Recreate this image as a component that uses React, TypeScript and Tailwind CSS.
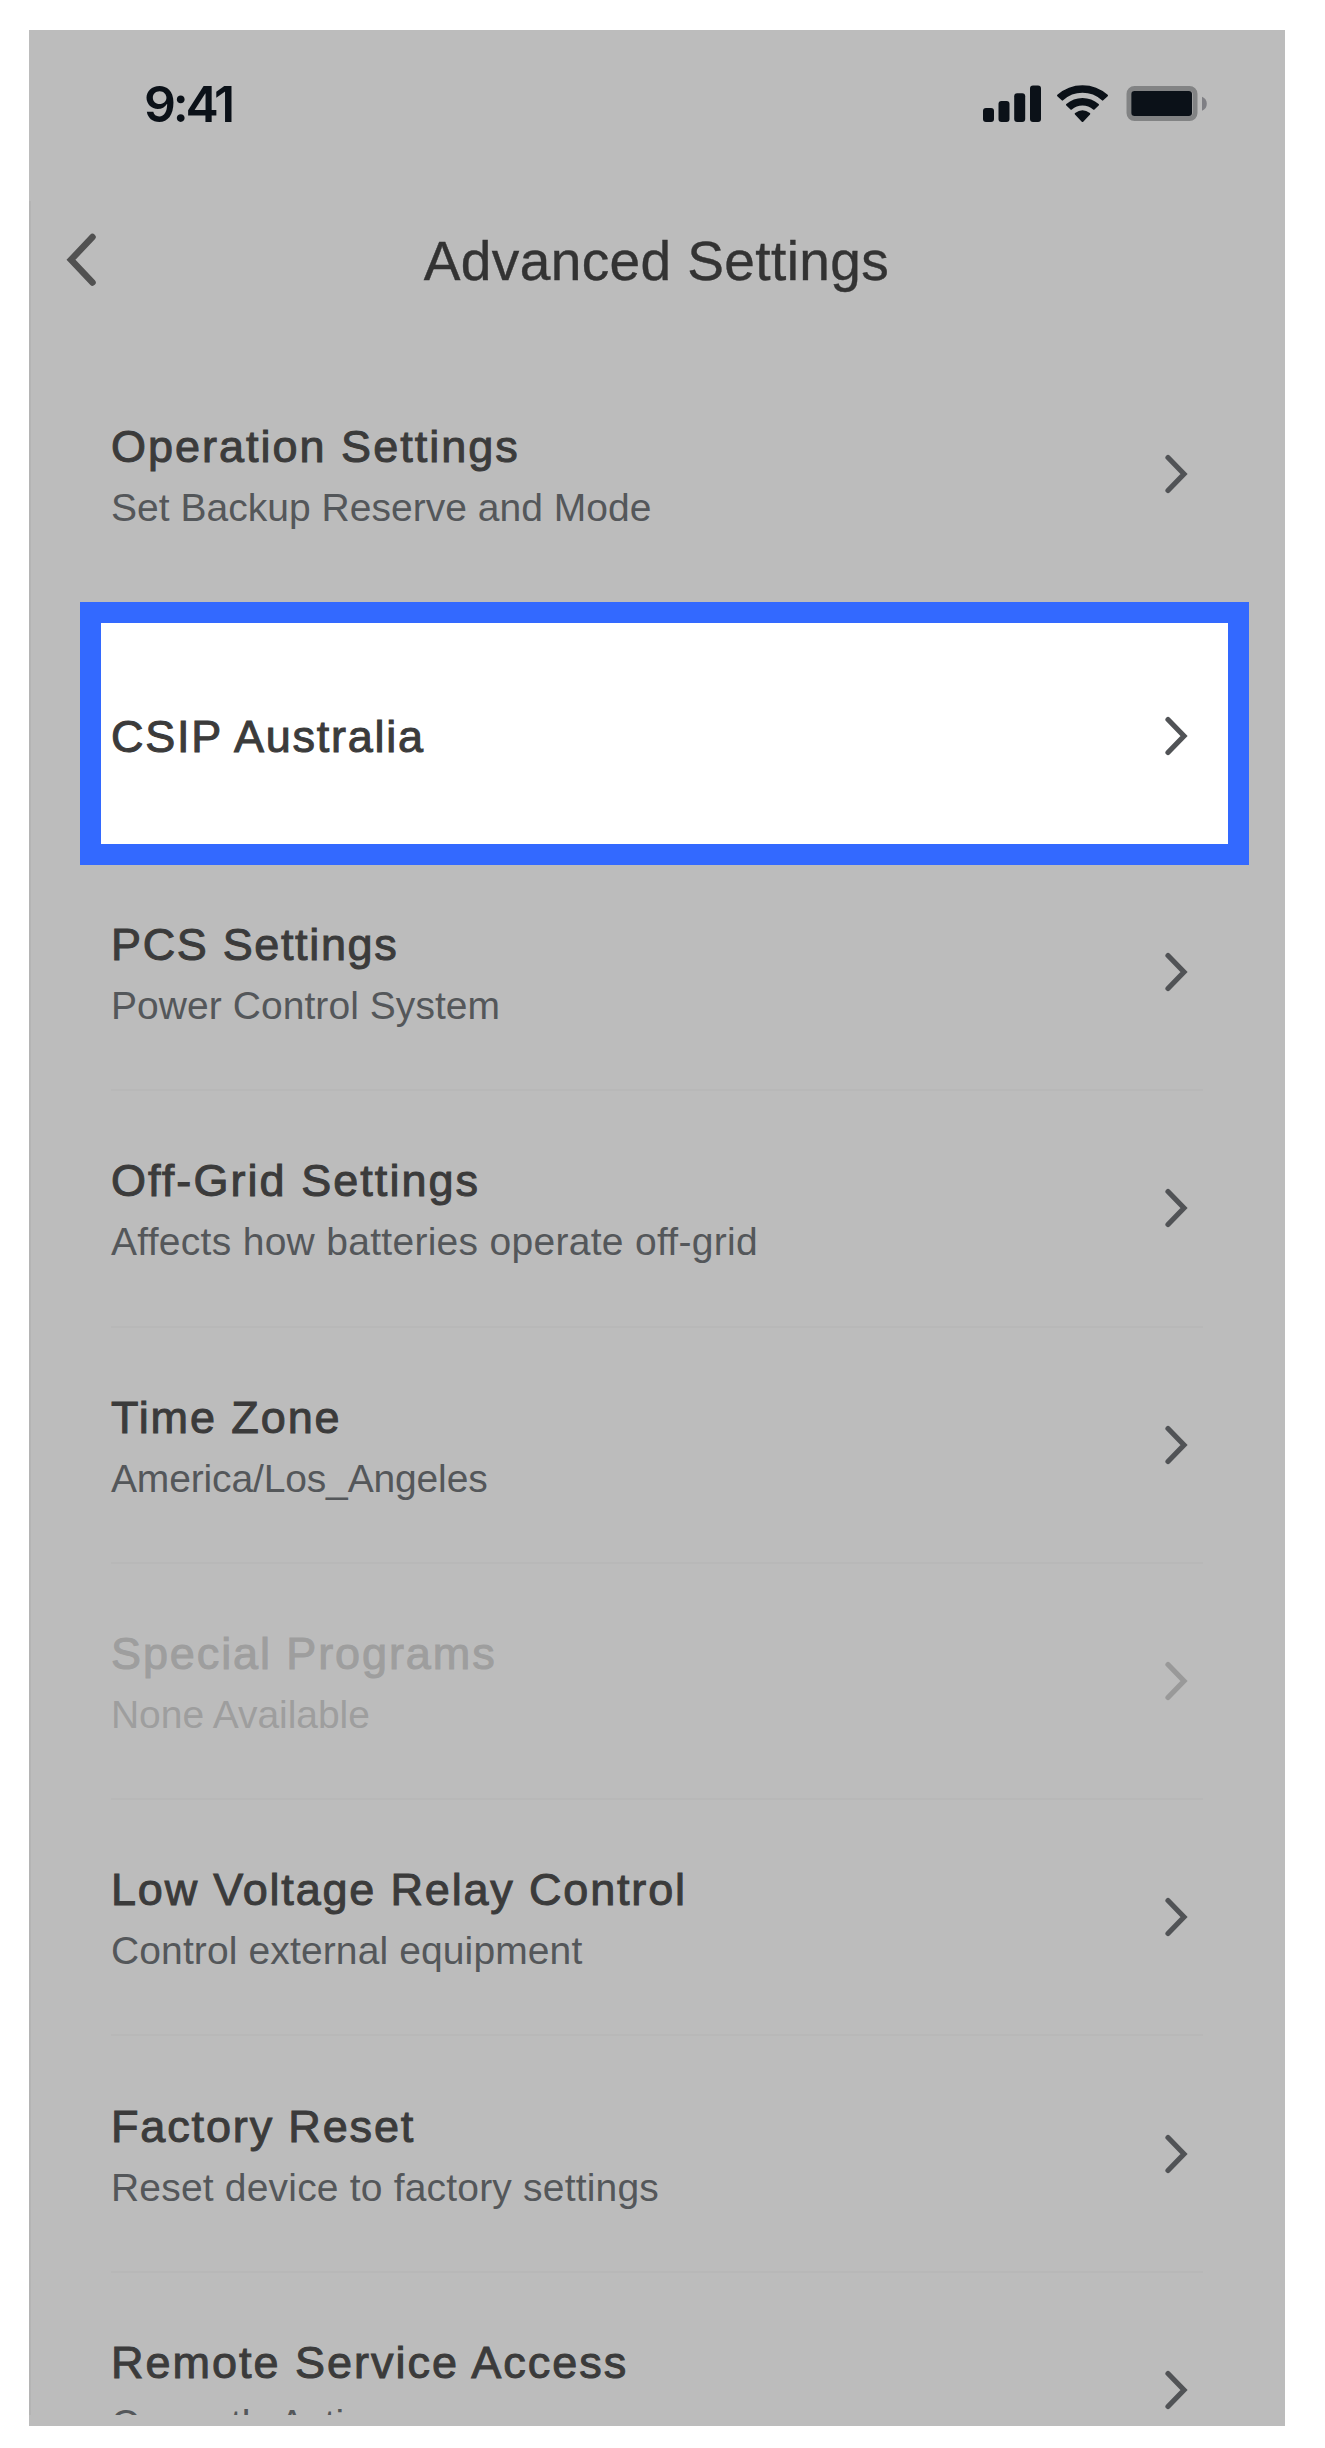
interface SettingItem {
  title: string;
  subtitle?: string;
  disabled?: boolean;
  titleClass?: string;
  subtitleClass?: string;
}

const operationItem: SettingItem = {
  title: 'Operation Settings',
  subtitle: 'Set Backup Reserve and Mode',
  titleClass: 'tracking-[2px]',
  subtitleClass: 'tracking-[0.02px]',
};

const highlightedItem: SettingItem = {
  title: 'CSIP Australia',
  titleClass: 'tracking-[1.75px]',
};

const items: SettingItem[] = [
  {
    title: 'PCS Settings',
    subtitle: 'Power Control System',
    titleClass: 'tracking-[1.65px]',
    subtitleClass: 'tracking-[0.06px]',
  },
  {
    title: 'Off-Grid Settings',
    subtitle: 'Affects how batteries operate off-grid',
    titleClass: 'tracking-[2.05px]',
    subtitleClass: 'tracking-[0.29px]',
  },
  {
    title: 'Time Zone',
    subtitle: 'America/Los_Angeles',
    titleClass: 'tracking-[1.9px]',
    subtitleClass: 'tracking-[-0.15px]',
  },
  {
    title: 'Special Programs',
    subtitle: 'None Available',
    disabled: true,
    titleClass: 'tracking-[1.9px]',
    subtitleClass: 'tracking-[-0.05px]',
  },
  {
    title: 'Low Voltage Relay Control',
    subtitle: 'Control external equipment',
    titleClass: 'tracking-[1.82px]',
    subtitleClass: 'tracking-[0.12px]',
  },
  {
    title: 'Factory Reset',
    subtitle: 'Reset device to factory settings',
    titleClass: 'tracking-[1.85px]',
    subtitleClass: 'tracking-[0.19px]',
  },
  {
    title: 'Remote Service Access',
    subtitle: 'Currently Active',
    titleClass: 'tracking-[2px]',
    subtitleClass: 'tracking-[0.1px]',
  },
];

function StatusIcons() {
  return (
    <svg className="w-[226px] h-10" viewBox="0 0 226 40" fill="#0b1118">
      {/* signal */}
      <rect x="1" y="25" width="11" height="14" rx="3" />
      <rect x="16.5" y="18" width="11" height="21" rx="3" />
      <rect x="32.2" y="10.3" width="11" height="28.7" rx="3" />
      <rect x="48" y="2.5" width="11" height="36.5" rx="3" />
      {/* wifi */}
      <g stroke="#0b1118" strokeWidth="2" strokeLinejoin="round">
        <path d="M76 12.6 A36.5 36.5 0 0 1 125 12.6 L120.6 16.6 A30 30 0 0 0 80.4 16.6 Z" />
        <path d="M85 21.8 A23.5 23.5 0 0 1 116 21.8 L111.8 25.8 A17 17 0 0 0 89.2 25.8 Z" />
        <path d="M93.7 30.7 Q100.5 25.8 107.3 30.7 L100.5 38 Z" />
      </g>
      {/* battery */}
      <rect x="147" y="5.5" width="66" height="30" rx="5.5" fill="none" stroke="#828384" strokeWidth="5" />
      <rect x="149.3" y="8" width="60.7" height="25" rx="3" />
      <path d="M220 13.7 A7.5 7.5 0 0 1 220 27.7 Z" fill="#7f7f84" />
    </svg>
  );
}

function Chevron({ disabled }: { disabled?: boolean }) {
  return (
    <svg
      className={`w-6 h-10 shrink-0 ${disabled ? 'text-[#999999]' : 'text-[#515356]'}`}
      viewBox="0 0 24 40"
      fill="none"
      stroke="currentColor"
      strokeWidth={5.2}
      strokeLinecap="round"
    >
      <path d="M4 3.5 L20 20 L4 36.5" />
    </svg>
  );
}

function SettingRow({ item }: { item: SettingItem }) {
  return (
    <div className="flex h-full items-center justify-between">
      <div className={item.subtitle ? 'pt-[7px]' : 'pt-[3px]'}>
        <div
          className={`text-[45px] leading-[60px] whitespace-nowrap [-webkit-text-stroke:1px_currentColor] ${item.titleClass} ${
            item.disabled ? 'text-[#9e9e9e]' : 'text-[#3b3b3b]'
          }`}
        >
          {item.title}
        </div>
        {item.subtitle && (
          <div
            className={`mt-px text-[39px] leading-[60px] whitespace-nowrap ${item.subtitleClass} ${
              item.disabled ? 'text-[#9e9e9e]' : 'text-[#54575a]'
            }`}
          >
            {item.subtitle}
          </div>
        )}
      </div>
      <Chevron disabled={item.disabled} />
    </div>
  );
}

export default function App() {
  return (
    <div className="w-[1325px] h-[2448px] bg-white pt-[30px] pl-[29px] overflow-hidden font-['Liberation_Sans',Arial,sans-serif]">
      <div className="w-[1256px] h-[2396px] bg-[#bcbcbc] overflow-hidden">
        <div className="flex h-[171px] items-start justify-between pl-[115px] pr-[77px] pt-[53px]">
          <div className="font-['Inter',sans-serif] text-[50px] leading-[42px] font-semibold tracking-[-3.2px] text-[#0b1118]">
            9:41
          </div>
          <StatusIcons />
        </div>

        <div className="h-[2214px] border-l-2 border-[#b4b4b4] overflow-hidden">
          <div className="grid h-[154px] grid-cols-[80px_1fr_80px] items-start pt-8 pl-[35px] pr-[38px]">
            <svg
              className="w-8 h-[54px]"
              viewBox="0 0 32 54"
              fill="none"
              stroke="#515151"
              strokeWidth={6.5}
              strokeLinecap="round"
            >
              <path d="M26.5 4 L5 26.8 L26.5 49.5" />
            </svg>
            <h1 className="text-center text-[55px] leading-[56px] tracking-[0.4px] text-[#333333] [-webkit-text-stroke:0.4px_currentColor]">
              Advanced Settings
            </h1>
          </div>

          <div className="ml-[80px] h-[237px] w-[1092px] pr-[15px]">
            <SettingRow item={operationItem} />
          </div>

          <div className="mt-[10px] ml-[49px] w-[1169px] h-[263px] border-[21px] border-[#3369ff] bg-white pt-[4px] pl-[10px] pr-[40px]">
            <SettingRow item={highlightedItem} />
          </div>

          <div className="-mt-[10px] ml-[80px] w-[1092px]">
            {items.map((item) => (
              <div key={item.title} className="h-[236.3px] border-b-2 border-[#b8b8b8] pr-[15px]">
                <SettingRow item={item} />
              </div>
            ))}
          </div>
        </div>
      </div>
    </div>
  );
}
